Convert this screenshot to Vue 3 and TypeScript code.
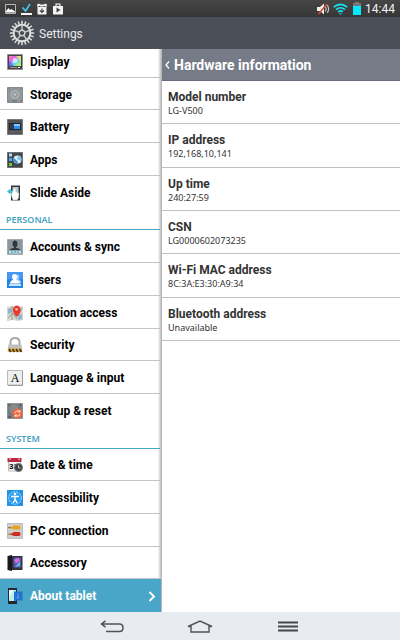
<script setup lang="ts">
import { ref } from 'vue'

interface Entry {
  kind: 'row' | 'heading'
  label: string
  icon?: string
}

const entries: Entry[] = [
  { kind: 'row', label: 'Display', icon: 'display' },
  { kind: 'row', label: 'Storage', icon: 'storage' },
  { kind: 'row', label: 'Battery', icon: 'battery' },
  { kind: 'row', label: 'Apps', icon: 'apps' },
  { kind: 'row', label: 'Slide Aside', icon: 'slide' },
  { kind: 'heading', label: 'PERSONAL' },
  { kind: 'row', label: 'Accounts & sync', icon: 'accounts' },
  { kind: 'row', label: 'Users', icon: 'users' },
  { kind: 'row', label: 'Location access', icon: 'location' },
  { kind: 'row', label: 'Security', icon: 'security' },
  { kind: 'row', label: 'Language & input', icon: 'language' },
  { kind: 'row', label: 'Backup & reset', icon: 'backup' },
  { kind: 'heading', label: 'SYSTEM' },
  { kind: 'row', label: 'Date & time', icon: 'date' },
  { kind: 'row', label: 'Accessibility', icon: 'accessibility' },
  { kind: 'row', label: 'PC connection', icon: 'pc' },
  { kind: 'row', label: 'Accessory', icon: 'accessory' },
  { kind: 'row', label: 'About tablet', icon: 'about' },
]

const selected = ref('About tablet')

const details = [
  { name: 'Model number', value: 'LG-V500' },
  { name: 'IP address', value: '192,168,10,141' },
  { name: 'Up time', value: '240:27:59' },
  { name: 'CSN', value: 'LG0000602073235' },
  { name: 'Wi-Fi MAC address', value: '8C:3A:E3:30:A9:34' },
  { name: 'Bluetooth address', value: 'Unavailable' },
]

const teeth = Array.from({ length: 20 }, (_, i) => i * 18)
const spokes = [0, 72, 144, 216, 288]
</script>

<template>
  <div class="screen">
    <div class="status">
      <div class="status-group notices">
        <svg width="11" height="12" viewBox="0 0 11 12">
          <path d="M.5 1.500h10v9H.5z" fill="#3a3a3a" stroke="#b8b8b8" />
          <path d="M1 9.500V8l2.500-3L5 7l1.500-1L10 8.500v1z" fill="#fff" />
        </svg>
        <svg width="12" height="12" viewBox="0 0 12 12">
          <path d="M2.500 4.500l3 3.500L10 1" fill="none" stroke="#45bfe2" stroke-width="1.800" />
          <path d="M1 11h11" stroke="#f4f4f4" stroke-width="2" />
        </svg>
        <svg width="12" height="12" viewBox="0 0 12 12">
          <path d="M1 1.500l2-1 1 1h4l1-1 2 1-.5 3H10.500v7h-9v-7z" fill="#f2f2f2" />
          <path d="M2.500 3.500h2M5.500 3.500h1M7.500 3.500h2M6 5.500v4M4 7.500l2 2 2-2" fill="none" stroke="#444" stroke-width="1.200" />
        </svg>
        <svg width="12" height="12" viewBox="0 0 12 12">
          <path d="M4 3V1.200h4V3" fill="none" stroke="#eee" stroke-width="1.200" />
          <path d="M1 3h10v8.500H1z" fill="#f4f4f4" />
          <path d="M4.500 4.500v5l4-2.500z" fill="#444" />
        </svg>
      </div>
      <div class="status-group">
        <svg width="13" height="12" viewBox="0 0 13 12">
          <path d="M0 4h3l4-3.500v11L3 8H0z" fill="#f0f0f0" />
          <path d="M8.500 3.500q1.500 2.500 0 5M10.500 2q2.500 4 0 8" fill="none" stroke="#ddd" />
          <path d="M1.500 11L10 1" stroke="#e0492c" stroke-width="1.500" />
        </svg>
        <svg class="wifi" width="15" height="12" viewBox="0 0 15 12">
          <path d="M.7 4.200q6.800-5.600 13.600 0M2.900 6.600q4.600-3.800 9.200 0M5.100 8.900q2.400-2 4.800 0" fill="none" stroke="#19e5f5" stroke-width="1.500" />
          <path d="M6 10.200h3l-1.500 1.600z" fill="#19e5f5" />
        </svg>
        <svg class="cell" width="8" height="13" viewBox="0 0 8 13">
          <path d="M2 0h4v1h2v3H0V1h2z" fill="#777" />
          <path d="M0 4h8v9H0z" fill="#08e8fa" />
        </svg>
        <span class="clock">14:44</span>
      </div>
    </div>

    <header class="titlebar">
      <svg width="26" height="26" viewBox="-13 -13 26 26">
        <rect v-for="a in teeth" :key="a" x="-.8" y="-12.200" width="1.600" height="4" fill="#d8d8d8" :transform="`rotate(${a})`" />
        <circle r="8.300" fill="#454950" stroke="#dedede" stroke-width="2" />
        <path v-for="a in spokes" :key="`s${a}`" d="M0-3v-5" stroke="#c4c4c4" stroke-width="1.500" :transform="`rotate(${a})`" />
        <circle r="2.800" fill="#454950" stroke="#d0d0d0" stroke-width="1.500" />
      </svg>
      <h1>Settings</h1>
    </header>

    <div class="panes">
      <nav class="sidebar" aria-label="Settings">
        <template v-for="entry in entries" :key="entry.label">
          <h2 v-if="entry.kind === 'heading'" class="heading">{{ entry.label }}</h2>
          <button v-else type="button" class="row" :class="{ active: selected === entry.label }" @click="selected = entry.label">
            <svg class="icon" width="16" height="16" viewBox="0 0 16 16">
              <template v-if="entry.icon === 'display'">
                <defs>
                  <linearGradient id="hue" x2="1" y2="1">
                    <stop offset="0" stop-color="#ff8ea0" /><stop offset=".3" stop-color="#e95cf0" />
                    <stop offset=".55" stop-color="#63c8ff" /><stop offset=".8" stop-color="#8cf08a" /><stop offset="1" stop-color="#f6e860" />
                  </linearGradient>
                </defs>
                <path d="M.5.500h15v15H.5z" fill="#444" stroke="#929292" />
                <path d="M2 2h12v10H2z" fill="url(#hue)" />
                <path d="M9 2h5v6z" fill="#fff04f" opacity=".75" />
                <path d="M2 7l5 5H2z" fill="#5763ff" opacity=".8" />
                <circle cx="8" cy="6.500" r="2.500" fill="#fff" opacity=".65" />
                <path d="M3 13.500h7" stroke="#999" /><path d="M11 13.500h2" stroke="#fff" />
              </template>
              <template v-else-if="entry.icon === 'storage'">
                <path d="M.5.500h15v15H.5z" fill="#93989b" stroke="#858a8d" />
                <circle cx="8" cy="7.500" r="5.500" fill="#a6abad" stroke="#8b9093" />
                <circle cx="8" cy="7.500" r="2" fill="#bbc0c2" stroke="#8b9093" />
                <path d="M1.500 2h1M13.500 2h1M1.500 14h1M13.500 14h1M5 14h5" stroke="#666" />
              </template>
              <template v-else-if="entry.icon === 'battery'">
                <path d="M.5.500h15v15H.5z" fill="#505256" stroke="#77797c" />
                <path d="M2 4h12v7H2z" fill="#222830" />
                <path d="M3 5h4v5H3z" fill="#343f4d" /><path d="M7 5h6v5H7z" fill="#268ff0" /><path d="M7 5h6v2H7z" fill="#8ccbff" />
                <path d="M2 13h12" stroke="#686b70" />
              </template>
              <template v-else-if="entry.icon === 'apps'">
                <path d="M.5.500h15v15H.5z" fill="#42474b" stroke="#6b7073" />
                <path d="M2 1.500h3v3H2z" fill="#b7d8f3" /><path d="M2 6h3v3H2z" fill="#55a9e8" /><path d="M2 11h3v3H2z" fill="#65c93e" />
                <circle cx="10.500" cy="7.500" r="4" fill="#dff2ff" /><path d="M7 6l4 4-1 1.500Q6 10 7 6z" fill="#318fd4" /><path d="M11 4q4 1 3 5l-4-2z" fill="#73c1ea" />
              </template>
              <template v-else-if="entry.icon === 'slide'">
                <path d="M4 .5h9v15H4z" fill="#33383d" /><path d="M5.500 2h6v11h-6z" fill="#b9cbd1" />
                <path d="M0 6.500l3.500-3v2H8v2H3.500v2z" fill="#37c0dd" />
                <path d="M4 9l1.500-2L7 3h1.500l.5 4 3 1-.5 5-1.500 2H6z" fill="#fff" stroke="#bbb" stroke-width=".5" />
              </template>
              <template v-else-if="entry.icon === 'accounts'">
                <path d="M.5.500h15v15H.5z" fill="#8b979e" stroke="#a2aab0" />
                <path d="M5.500 5q0-3.500 2.500-3.500T10.500 5 9 8v1q4 0 4.500 2.500h-11Q3 9 7 9V8Q5.500 7 5.500 5z" fill="#30383e" />
                <path d="M2 11.500h12v3H2z" fill="#bde4ee" /><path d="M4 13h8" stroke="#398798" stroke-dasharray="2 1" />
              </template>
              <template v-else-if="entry.icon === 'users'">
                <path d="M0 0h16v16H0z" fill="#2486e9" /><path d="M0 0h16v7H0z" fill="#4699f1" />
                <path d="M9 3q2-1 3 .5T11 7q3 1 3 4H9z" fill="#a7cffa" />
                <path d="M5 5Q5 2 7.500 2T10 5L9 8q4 1 4 3.500H3q0-2.500 3-3.500z" fill="#fff" /><path d="M2 13h12" stroke="#c8e2ff" stroke-width="2" />
              </template>
              <template v-else-if="entry.icon === 'location'">
                <path d="M0 2l5-1 5 1 6-1v14l-5 1-5-1-6 1z" fill="#d7d5c8" />
                <path d="M1 4l4-1v4l-4 2zM11 10l4-1v5l-4 1z" fill="#8eb6d0" /><path d="M1 13l5-5 4 6M5 1v14M11 9l4-6" fill="none" stroke="#8fa2a8" />
                <path d="M9.500 12Q5.500 7 6 4t3.500-3.500T13.500 4t-4 8z" fill="#e6392d" /><circle cx="9.500" cy="4.300" r="1.400" fill="#ffb9ad" />
              </template>
              <template v-else-if="entry.icon === 'security'">
                <path d="M3.500 9V5Q3.500 1 8 1t4.500 4v4" fill="none" stroke="#aaa" stroke-width="2" />
                <path d="M1.500 7.500h13l1 7H.5z" fill="#bfc0c1" /><path d="M1 11.500h14v3.500H1z" fill="#efaa2e" />
                <path d="M2 12l2 3M5.500 12l2 3M9 12l2 3M12.500 12l2 3" stroke="#333" stroke-width="1.600" />
              </template>
              <template v-else-if="entry.icon === 'language'">
                <path d="M.5.500h15v14.500H.5z" fill="#efefef" stroke="#bbb" /><path d="M1 15.500h14.500V1" fill="none" stroke="#999" />
                <text x="8" y="12" text-anchor="middle" class="letter">A</text>
              </template>
              <template v-else-if="entry.icon === 'backup'">
                <path d="M.5.500h15v15H.5z" fill="#777b7d" stroke="#919496" /><circle cx="7" cy="6" r="4.500" fill="#868b8e" />
                <path d="M1.500 2h1M13 2h1M1.500 14h2" stroke="#333" /><circle cx="10.500" cy="10.500" r="5" fill="#ed6a3b" />
                <path d="M8 10q1-3 4-2l1 1M13 11q-1 3-4 2l-1-1M13 7v2h-2M8 14v-2h2" fill="none" stroke="#ffe0d2" />
              </template>
              <template v-else-if="entry.icon === 'date'">
                <path d="M1.500 2h12v12h-12z" fill="#f4f4f4" stroke="#bbb" /><path d="M.5 1h14v4H.5z" fill="#bb2745" /><path d="M3 0v3M12 0v3" stroke="#ddd" />
                <text x="2" y="12" class="digit">31</text><circle cx="11.500" cy="10.500" r="4" fill="#404247" stroke="#777" /><path d="M11.500 8v3h2" fill="none" stroke="#ddd" stroke-width=".8" />
              </template>
              <template v-else-if="entry.icon === 'accessibility'">
                <path d="M0 0h16v16H0z" fill="#2494e7" /><circle cx="8" cy="8" r="6.300" fill="#2e9ded" stroke="#b9e3ff" stroke-dasharray="2 1" />
                <circle cx="8" cy="4" r="1.300" fill="#fff" /><path d="M4 6.500h8M8 6.500v3L6 13M8 9l2 4" fill="none" stroke="#fff" stroke-width="1.400" />
              </template>
              <template v-else-if="entry.icon === 'pc'">
                <path d="M.5.500h15v15H.5z" fill="#cecece" stroke="#bcbcbc" />
                <path d="M3 4h2l1.500-1.500H12q1.500 0 1.500 2T12 6.500H6.500L5 5.500H3z" fill="#e5a321" /><path d="M1 4.700h3" stroke="#85672c" />
                <path d="M3 10.500h2L6.500 9H12q1.500 0 1.500 2T12 13H6.500L5 12H3z" fill="#cc2c23" /><path d="M1 11.200h3" stroke="#9c802a" />
              </template>
              <template v-else-if="entry.icon === 'accessory'">
                <path d="M.5 1L5 0v16l-4.500-1z" fill="#17191c" /><path d="M5 1h10.500v14H5z" fill="#30333a" />
                <path d="M6.500 2.500H14v10H6.500z" fill="#5b55a8" /><path d="M7 5l4-2.500 2 3-4 3z" fill="#dc69df" /><path d="M8 12l5-6v5z" fill="#5eb6eb" />
              </template>
              <template v-else>
                <path d="M1 0h9v16H1z" fill="#22292e" /><path d="M2 2h7v11H2z" fill="#b9edf4" /><path d="M2 2h5L2 9z" fill="#e8fcff" />
                <path d="M7 3.500h8.500v9H9l-2 1z" fill="#2274d0" /><path d="M11 6v1M11 8v2.500" stroke="#7db4ee" />
              </template>
            </svg>
            <span class="label">{{ entry.label }}</span>
            <svg v-if="selected === entry.label" class="chevron" width="8" height="11" viewBox="0 0 8 11">
              <path d="M1.500 1l4.500 4.500L1.500 10" fill="none" stroke="#fff" stroke-width="1.900" />
            </svg>
          </button>
        </template>
      </nav>

      <main class="content">
        <button type="button" class="subtitle">
          <svg width="5" height="8" viewBox="0 0 5 8"><path d="M4 .5L1 4l3 3.500" fill="none" stroke="#fff" stroke-width="1.300" /></svg>
          <span>Hardware information</span>
        </button>
        <dl class="details">
          <div v-for="item in details" :key="item.name" class="detail">
            <dt>{{ item.name }}</dt>
            <dd>{{ item.value }}</dd>
          </div>
        </dl>
      </main>
    </div>

    <footer class="navbar">
      <button type="button" aria-label="Back">
        <svg width="24" height="13" viewBox="0 0 24 13"><path d="M5.500.800L1.500 4l4 3.200M1.500 4H19.500q3.500 0 3.500 3.800t-3.500 3.700H6" fill="none" stroke="#50535d" stroke-width="1.500" /></svg>
      </button>
      <button type="button" aria-label="Home">
        <svg width="26" height="13" viewBox="0 0 26 13"><path d="M1 6.500L13 1l12 5.500M1 6.500h3v5.500h18V6.500h3" fill="none" stroke="#50535d" stroke-width="1.400" /></svg>
      </button>
      <button type="button" aria-label="Menu">
        <svg width="20" height="11" viewBox="0 0 20 11"><path d="M0 1.500h20M0 5.500h20M0 9.500h20" stroke="#454752" stroke-width="1.800" /></svg>
      </button>
    </footer>
  </div>
</template>

<style>
body {
  margin: 0;
}
</style>

<style scoped>
.screen {
  display: flex;
  flex-direction: column;
  min-height: 100vh;
  font-family: Roboto, "Noto Sans", sans-serif;
  background: #fff;
  color: #000;
}
button {
  border: 0;
  padding: 0;
  background: none;
  font: inherit;
  color: inherit;
  cursor: pointer;
}
svg {
  display: block;
  flex: none;
}
.status {
  display: flex;
  justify-content: space-between;
  align-items: center;
  height: 17px;
  padding: 0 5px;
  background: linear-gradient(#464646, #363636);
}
.status-group {
  display: flex;
  align-items: center;
}
.notices {
  gap: 4px;
}
.wifi {
  margin-left: 3px;
}
.cell {
  margin: 0 4px 0 5px;
}
.clock {
  font-size: 12px;
  line-height: 16px;
  color: #f2f2f2;
}
.titlebar {
  display: flex;
  align-items: center;
  gap: 4px;
  height: 32px;
  padding: 0 9px;
  background: #4a4e56;
  color: #e9eaec;
}
h1 {
  margin: 0;
  padding-top: 2px;
  font-size: 12px;
  line-height: 16px;
  font-weight: 400;
}
.panes {
  flex: 1;
  display: grid;
  grid-template-columns: minmax(162px, 40%) 1fr;
  overflow: hidden;
}
.sidebar {
  display: flex;
  flex-direction: column;
  margin-top: -4px;
  background: linear-gradient(to left, #aeaeae, #d2d2d2 2px, #fff 4px);
}
.row {
  flex: 1 1 0;
  min-height: 32px;
  display: flex;
  align-items: center;
  gap: 7px;
  box-sizing: border-box;
  margin-right: 2px;
  padding: 2px 5px 0 7px;
  border-bottom: 1px solid #c3c4c8;
  text-align: left;
  font-size: 12px;
  line-height: 16px;
  font-weight: 700;
}
.row:has(+ .heading) {
  border-bottom-color: transparent;
}
.row.active {
  margin-right: 1px;
  background: #4aa6c8;
  border-bottom-color: #4aa6c8;
  color: #fff;
}
.label {
  flex: 1;
  white-space: nowrap;
}
.letter {
  font: 12px "Liberation Serif", serif;
}
.digit {
  font: bold 8px "Liberation Sans", sans-serif;
}
.heading {
  box-sizing: border-box;
  height: 22px;
  margin: 0 2px 0 0;
  padding: 4px 6px 1px;
  border-bottom: 1px solid #4aa6c8;
  font-family: "Noto Sans", sans-serif;
  font-size: 9px;
  line-height: 16px;
  font-weight: 600;
  color: #45a2c4;
}
.content {
  min-width: 0;
}
.subtitle {
  display: flex;
  align-items: center;
  gap: 4px;
  width: 100%;
  height: 32px;
  padding: 0 3px;
  border-bottom: 1px solid #686d7b;
  background: #767b88;
  color: #fff;
  font-size: 14px;
  line-height: 20px;
  font-weight: 700;
  white-space: nowrap;
}
.details {
  display: grid;
  grid-auto-rows: 1fr;
  min-height: 260px;
  margin: 0;
}
.detail {
  box-sizing: border-box;
  padding: 8px 6px 3px;
  border-bottom: 1px solid #c0c1c6;
}
dt {
  font-size: 12px;
  line-height: 16px;
  font-weight: 700;
  color: #333;
}
dd {
  margin: 0;
  font-family: "Noto Sans", sans-serif;
  font-size: 9px;
  line-height: 12px;
  color: #333;
}
.navbar {
  display: flex;
  justify-content: center;
  gap: 12px;
  height: 28px;
  background: #e8ebef;
}
.navbar button {
  display: flex;
  align-items: center;
  justify-content: center;
  width: 76px;
}
</style>
